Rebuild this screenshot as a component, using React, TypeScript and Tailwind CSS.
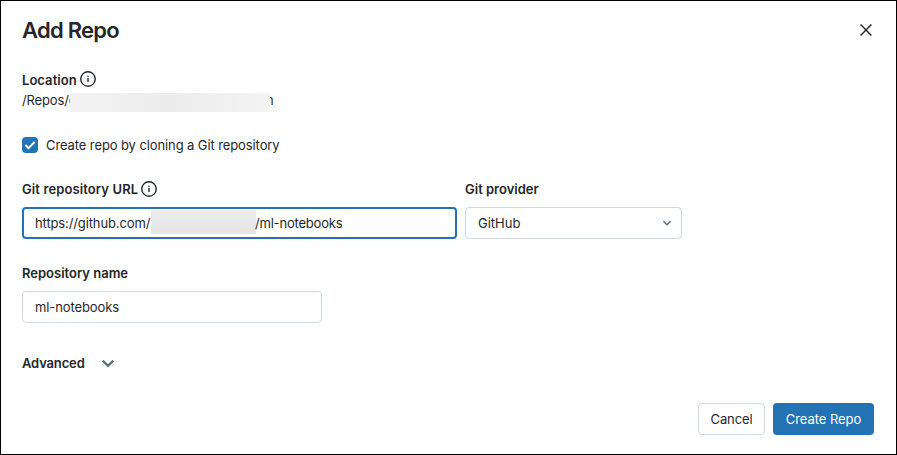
import { useState } from "react";

function InfoIcon() {
  return (
    <svg width="16" height="16" viewBox="0 0 16 16" fill="none" className="shrink-0">
      <circle cx="8" cy="8" r="7.25" stroke="#1f272d" strokeWidth="1.4" />
      <path d="M8 7v4" stroke="#1f272d" strokeWidth="1.4" />
      <circle cx="8" cy="5.2" r="0.8" fill="#1f272d" />
    </svg>
  );
}

export default function App() {
  const [name, setName] = useState("ml-notebooks");
  return (
    <div className="flex h-[455px] w-[897px] flex-col border border-black bg-white px-[21px] font-['Inter',sans-serif] text-[13px] leading-5 text-[#1f272d]">
      <header className="mt-[15px] flex h-7 items-center justify-between">
        <h1 className="text-[22px] leading-7 font-semibold tracking-[-0.75px] text-[#262626]">Add Repo</h1>
        <button aria-label="Close" className="mr-px flex h-4 w-4 items-center justify-center">
          <svg width="16" height="16" viewBox="0 0 16 16" fill="none">
            <path d="M2.6 2.6l10.8 10.8M13.4 2.6L2.6 13.4" stroke="#1f272d" strokeWidth="1.4" />
          </svg>
        </button>
      </header>

      <section className="mt-[26px]">
        <div className="flex h-5 items-center gap-[3px]">
          <span className="font-semibold tracking-[0.05px]">Location</span>
          <span className="-mt-0.5"><InfoIcon /></span>
        </div>
        <div className="flex h-5 items-center">
          <span className="w-[53px] tracking-[-0.15px] whitespace-nowrap">/Repos/c</span>
          <span className="relative z-10 mt-1 -mr-[4px] -ml-[5px] h-[19px] w-[200px] bg-linear-to-r from-[#f3f3f4] via-[#ececed] to-[#f4f4f5]" />
          <span>n</span>
        </div>
      </section>

      <label className="mt-[25px] flex h-5 items-center gap-2">
        <span className="flex h-4 w-4 items-center justify-center rounded bg-[#2272b4]">
          <svg width="16" height="16" viewBox="0 0 16 16" fill="none">
            <path d="M3.4 8l3.1 3.1 6.1-6.1" stroke="white" strokeWidth="1.9" />
          </svg>
        </span>
        <span className="tracking-[-0.1px]">Create repo by cloning a Git repository</span>
      </label>

      <div className="mt-6 flex gap-2">
        <div className="w-[435px]">
          <div className="flex h-5 items-center gap-[3px] font-semibold text-[#262626]">
            <span className="tracking-[0.11px]">Git repository URL</span>
            <InfoIcon />
          </div>
          <div className="mt-2 flex h-8 items-center rounded border-2 border-[#2272b4] pl-[11px]">
            <span className="w-[116px] tracking-[-0.12px] whitespace-nowrap">https://github.com/</span>
            <span className="-mt-0.5 h-6 w-[105px] bg-linear-to-b from-[#ececee] to-[#e5e6e8]" />
            <span className="-ml-px tracking-[-0.2px]">/ml-notebooks</span>
          </div>
        </div>
        <div className="w-[217px]">
          <div className="flex h-5 items-center font-semibold text-[#262626]">Git provider</div>
          <button className="mt-2 flex h-8 w-full items-center justify-between rounded border border-[#cbdae6] pr-[9px] pl-3">
            <span>GitHub</span>
            <svg width="10" height="10" viewBox="0 0 10 10" fill="none">
              <path d="M1.4 3.2L5 6.8l3.6-3.6" stroke="#5a6f80" strokeWidth="1.5" />
            </svg>
          </button>
        </div>
      </div>

      <div className="mt-6 flex h-5 items-center font-semibold text-[#262626]">Repository name</div>
      <input
        aria-label="Repository name"
        value={name}
        onChange={(e) => setName(e.target.value)}
        className="mt-2 h-8 w-[300px] shrink-0 rounded border border-[#cbdae6] px-3 tracking-[-0.1px] outline-none"
      />

      <button className="mt-[30px] flex h-5 items-center font-semibold text-[#262626]">
        <span className="w-[79px] text-left tracking-[-0.15px]">Advanced</span>
        <svg width="14" height="14" viewBox="0 0 14 14" fill="none">
          <path d="M1.6 4.6L7 9.8l5.4-5.2" stroke="#5a6f80" strokeWidth="2.3" />
        </svg>
      </button>

      <footer className="mt-[30px] flex justify-end gap-2">
        <button className="h-8 w-[67px] rounded border border-[#cbdae6] tracking-[-0.1px]">Cancel</button>
        <button className="mr-px h-8 w-[101px] rounded bg-[#2272b4] tracking-[-0.05px] text-white">Create Repo</button>
      </footer>
    </div>
  );
}
